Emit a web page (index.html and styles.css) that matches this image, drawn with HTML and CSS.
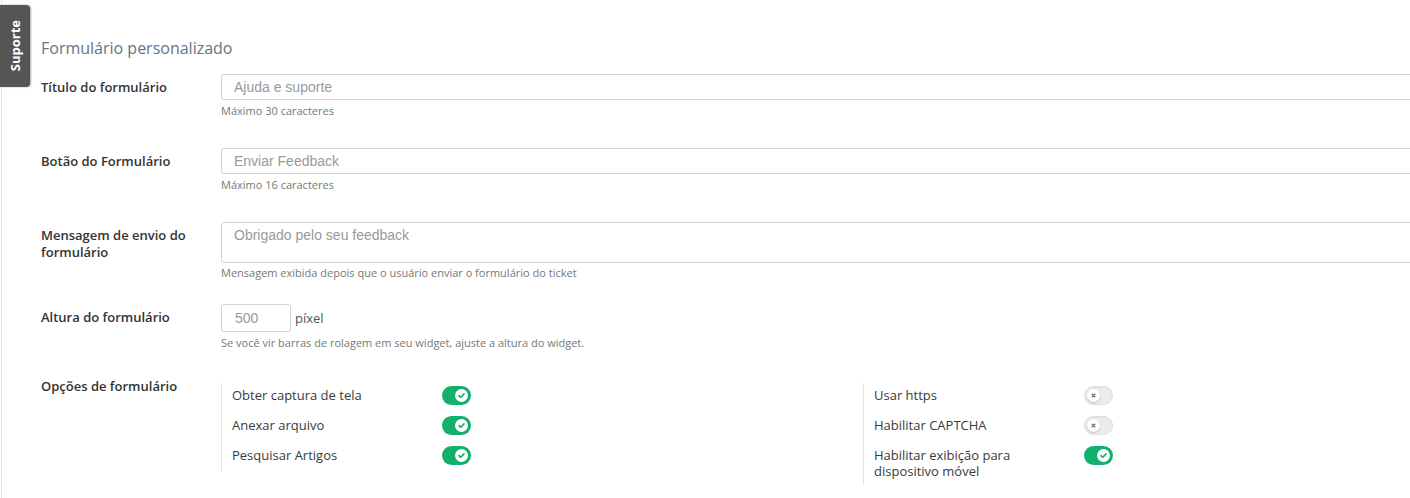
FILE: index.html
```html
<!DOCTYPE html>
<html lang="pt">
<head>
<meta charset="utf-8">
<title>Formulário personalizado</title>
<link rel="stylesheet" href="styles.css">
</head>
<body>
<div class="tab"><span class="tab-text">Suporte</span></div>
<div class="page">
  <h2 class="heading">Formulário personalizado</h2>

  <div class="row row-1">
    <div class="label">Título do formulário</div>
    <div class="field">
      <input class="text-input" type="text" placeholder="Ajuda e suporte">
      <div class="help">Máximo 30 caracteres</div>
    </div>
  </div>

  <div class="row row-2">
    <div class="label">Botão do Formulário</div>
    <div class="field">
      <input class="text-input" type="text" placeholder="Enviar Feedback">
      <div class="help">Máximo 16 caracteres</div>
    </div>
  </div>

  <div class="row row-3">
    <div class="label">Mensagem de envio do formulário</div>
    <div class="field">
      <textarea class="text-area" placeholder="Obrigado pelo seu feedback"></textarea>
      <div class="help help-tight">Mensagem exibida depois que o usuário enviar o formulário do ticket</div>
    </div>
  </div>

  <div class="row row-4">
    <div class="label">Altura do formulário</div>
    <div class="field">
      <div class="inline">
        <input class="num-input" type="text" placeholder="500">
        <span class="unit">píxel</span>
      </div>
      <div class="help">Se você vir barras de rolagem em seu widget, ajuste a altura do widget.</div>
    </div>
  </div>

  <div class="row row-5">
    <div class="label">Opções de formulário</div>
    <div class="field options">
      <div class="opt-col">
        <div class="opt"><span class="opt-text">Obter captura de tela</span><span class="toggle on"><span class="knob"><svg viewBox="0 0 10 10" width="9" height="9"><path d="M2.3 5.2 L4.2 7 L7.8 3.2" fill="none" stroke="#12b06c" stroke-width="1.8" stroke-linecap="round" stroke-linejoin="round"/></svg></span></span></div>
        <div class="opt"><span class="opt-text">Anexar arquivo</span><span class="toggle on"><span class="knob"><svg viewBox="0 0 10 10" width="9" height="9"><path d="M2.3 5.2 L4.2 7 L7.8 3.2" fill="none" stroke="#12b06c" stroke-width="1.8" stroke-linecap="round" stroke-linejoin="round"/></svg></span></span></div>
        <div class="opt"><span class="opt-text">Pesquisar Artigos</span><span class="toggle on"><span class="knob"><svg viewBox="0 0 10 10" width="9" height="9"><path d="M2.3 5.2 L4.2 7 L7.8 3.2" fill="none" stroke="#12b06c" stroke-width="1.8" stroke-linecap="round" stroke-linejoin="round"/></svg></span></span></div>
      </div>
      <div class="opt-col">
        <div class="opt"><span class="opt-text">Usar https</span><span class="toggle off"><span class="knob"><svg viewBox="0 0 10 10" width="7" height="7"><path d="M3 3 L7 7 M7 3 L3 7" fill="none" stroke="#5f5f5f" stroke-width="1.9" stroke-linecap="round"/></svg></span></span></div>
        <div class="opt"><span class="opt-text">Habilitar CAPTCHA</span><span class="toggle off"><span class="knob"><svg viewBox="0 0 10 10" width="7" height="7"><path d="M3 3 L7 7 M7 3 L3 7" fill="none" stroke="#5f5f5f" stroke-width="1.9" stroke-linecap="round"/></svg></span></span></div>
        <div class="opt"><span class="opt-text">Habilitar exibição para dispositivo móvel</span><span class="toggle on"><span class="knob"><svg viewBox="0 0 10 10" width="9" height="9"><path d="M2.3 5.2 L4.2 7 L7.8 3.2" fill="none" stroke="#12b06c" stroke-width="1.8" stroke-linecap="round" stroke-linejoin="round"/></svg></span></span></div>
      </div>
    </div>
  </div>
</div>
</body>
</html>
```

FILE: styles.css
```css
html, body {
  margin: 0;
  padding: 0;
  background: #fff;
  overflow: hidden;
}
body {
  font-family: "Open Sans", "Noto Sans", sans-serif;
  color: #333;
  width: 1410px;
  height: 498px;
}
.tab {
  position: absolute;
  left: 0;
  top: 5px;
  width: 30px;
  height: 82px;
  background: #555;
  border-radius: 0 4px 4px 0;
  box-shadow: 1px 0 2px rgba(0,0,0,0.35);
  display: flex;
  align-items: center;
  justify-content: center;
  z-index: 2;
}
.tab-text {
  writing-mode: vertical-rl;
  transform: rotate(180deg);
  color: #fff;
  font-weight: 700;
  font-size: 13px;
}
.page {
  margin-left: 1px;
  border-left: 1px solid #e4e4e4;
  height: 498px;
  width: 1600px;
  padding: 36px 0 0 39px;
  box-sizing: border-box;
}
.heading {
  margin: 0 0 14px 0;
  font-size: 16px;
  line-height: 24px;
  font-weight: 400;
  color: #62748a;
}
.row {
  display: flex;
  align-items: flex-start;
}
.row-1, .row-2 { margin-bottom: 29px; }
.row-3 { margin-bottom: 23px; }
.row-4 { margin-bottom: 22px; }
.label {
  width: 180px;
  flex: none;
  padding-top: 5px;
  padding-right: 20px;
  box-sizing: border-box;
  font-size: 13px;
  line-height: 17px;
  font-weight: 600;
  color: #333;
}
.field {
  width: 1284px;
  flex: none;
}
.text-input, .text-area, .num-input {
  display: block;
  box-sizing: border-box;
  border: 1px solid #d2d2d2;
  border-radius: 3px;
  font-family: "Liberation Sans", Arial, sans-serif;
  font-size: 14px;
  color: #555;
  background: #fff;
  outline: none;
  margin: 0;
}
.text-input {
  width: 100%;
  height: 26px;
  padding: 0 12px;
}
.text-area {
  width: 100%;
  height: 41px;
  padding: 4px 12px;
  line-height: 16px;
  resize: none;
}
.text-input::placeholder, .text-area::placeholder, .num-input::placeholder {
  color: #999;
  opacity: 1;
}
.inline {
  display: flex;
  align-items: center;
}
.num-input {
  width: 70px;
  height: 28px;
  padding: 0 13px;
}
.unit {
  margin-left: 4px;
  font-size: 13px;
  color: #555;
}
.help {
  margin-top: 3px;
  font-size: 11px;
  line-height: 16px;
  color: #777;
}
.help-tight { margin-top: 2px; }
.options {
  display: flex;
  align-items: flex-start;
  margin-top: 10px;
}
.opt-col {
  width: 642px;
  flex: none;
  box-sizing: border-box;
  border-left: 1px solid #e2e2e2;
  padding: 0 0 5px 10px;
}
.opt {
  display: flex;
  align-items: flex-start;
  min-height: 24px;
  margin-bottom: 6px;
}
.opt:last-child { margin-bottom: 0; }
.opt-text {
  width: 172px;
  margin-right: 38px;
  flex: none;
  padding-top: 4px;
  font-size: 13px;
  line-height: 16px;
  color: #3a3a3a;
}
.toggle {
  flex: none;
  width: 29px;
  height: 19px;
  margin-top: 3px;
  border-radius: 10px;
  box-sizing: border-box;
  display: flex;
  align-items: center;
  padding: 0 3px;
}
.toggle.on {
  background: #12b06c;
  justify-content: flex-end;
}
.toggle.off {
  background: #ececec;
  border: 1px solid #dedede;
  justify-content: flex-start;
  padding: 0 2px;
  box-shadow: inset 0 1px 1px rgba(0,0,0,0.04);
}
.knob {
  width: 13px;
  height: 13px;
  border-radius: 50%;
  background: #fff;
  display: flex;
  align-items: center;
  justify-content: center;
}
.toggle.off .knob {
  box-shadow: 0 1px 2px rgba(0,0,0,0.2);
}
.knob svg { display: block; }
```
